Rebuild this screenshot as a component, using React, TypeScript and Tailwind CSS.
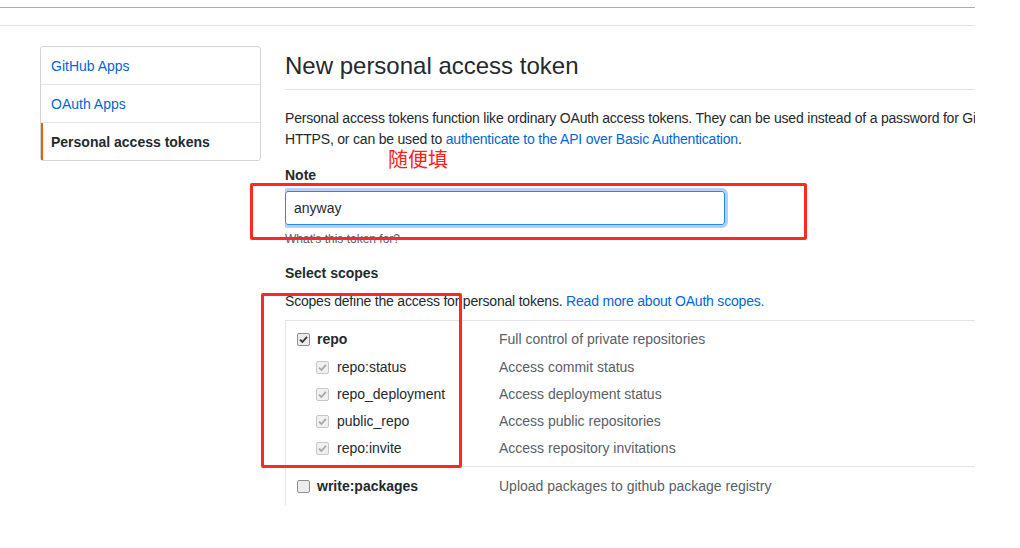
import React from 'react';

type Scope = { name: string; desc: string };

const repoChildren: Scope[] = [
  { name: 'repo:status', desc: 'Access commit status' },
  { name: 'repo_deployment', desc: 'Access deployment status' },
  { name: 'public_repo', desc: 'Access public repositories' },
  { name: 'repo:invite', desc: 'Access repository invitations' },
];

const Checkbox: React.FC<{ checked?: boolean; disabled?: boolean }> = ({ checked, disabled }) => (
  <span
    className={
      'inline-flex w-[13px] h-[13px] shrink-0 items-center justify-center rounded-[2px] border ' +
      (disabled ? 'border-[#c8c8c8] bg-[#f0f0f0]' : 'border-[#8f8f8f] bg-[#ececec]')
    }
  >
    {checked && (
      <svg width="9" height="9" viewBox="0 0 9 9">
        <path
          d="M1 4.6 L3.4 7 L8 1.8"
          fill="none"
          stroke={disabled ? '#a8a8a8' : '#333'}
          strokeWidth="1.8"
        />
      </svg>
    )}
  </span>
);

const App: React.FC = () => {
  return (
    <div
      className="relative w-[1020px] h-[548px] overflow-hidden bg-white text-[14px] text-[#24292e]"
      style={{ fontFamily: '"Liberation Sans", Arial, sans-serif' }}
    >
      <div className="w-[975px] pt-[7px]">
        <div className="h-px bg-[#acacac]" />
        <div className="h-[17px]" />
        <div className="h-px bg-[#e3e3e3]" />
      </div>

      <div className="flex pl-[40px] pt-[20px] w-[975px]">
        {/* sidebar */}
        <div className="w-[221px] shrink-0 self-start rounded-[3px] border border-[#d1d5da]">
          <div className="h-[38px] flex items-center pt-[1px] pl-[10px] border-b border-[#e1e4e8] text-[#0366d6]">
            GitHub Apps
          </div>
          <div className="h-[38px] flex items-center pt-[1px] pl-[10px] border-b border-[#e1e4e8] text-[#0366d6]">
            OAuth Apps
          </div>
          <div className="h-[37px] flex items-center pt-[1px] pl-[8px] border-l-2 border-[#e36209] font-semibold text-[#24292e]">
            Personal access tokens
          </div>
        </div>

        {/* main */}
        <div className="ml-[24px] flex-1 overflow-hidden">
          <div className="pb-[5px] border-b border-[#e1e4e8] mt-[2px]">
            <h1 className="text-[24px] leading-[36px] font-light whitespace-nowrap">New personal access token</h1>
          </div>

          <p className="mt-[18px] leading-[21px] whitespace-nowrap tracking-[-0.2px]">
            Personal access tokens function like ordinary OAuth access tokens. They can be used instead of a password for Git over
            <br />
            HTTPS, or can be used to <span className="text-[#0366d6]">authenticate to the API over Basic Authentication</span>.
          </p>

          <div className="mt-[15px] font-semibold leading-[21px]">Note</div>
          <div className="mt-[5px] w-[440px] h-[34px] rounded-[3px] border border-[#2188ff] shadow-[0_0_0_3px_rgba(3,102,214,0.3)] flex items-center pl-[8px]">
            anyway
          </div>
          <div className="mt-[5px] text-[12px] leading-[18px] text-[#586069]">What's this token for?</div>

          <div className="mt-[15px] font-semibold leading-[21px]">Select scopes</div>
          <div className="mt-[7px] leading-[21px] tracking-[-0.2px]">
            Scopes define the access for personal tokens.{' '}
            <span className="text-[#0366d6]">Read more about OAuth scopes.</span>
          </div>

          <div className="mt-[8px] border-t border-l border-[#e1e4e8]">
            <div className="pt-[8px] pb-[4px] border-b border-[#e1e4e8]">
              <div className="flex items-center h-[21px] pl-[11px]">
                <div className="w-[202px] flex items-center gap-[7px]">
                  <Checkbox checked />
                  <span className="font-semibold">repo</span>
                </div>
                <span className="text-[#586069]">Full control of private repositories</span>
              </div>
              <div className="mt-[4px]">
                {repoChildren.map((s) => (
                  <div key={s.name} className="flex items-center h-[27px] pl-[11px]">
                    <div className="w-[202px] flex items-center gap-[8px] pl-[19px]">
                      <Checkbox checked disabled />
                      <span>{s.name}</span>
                    </div>
                    <span className="text-[#586069]">{s.desc}</span>
                  </div>
                ))}
              </div>
            </div>
            <div className="pt-[9px] pb-[8px]">
              <div className="flex items-center h-[21px] pl-[11px]">
                <div className="w-[202px] flex items-center gap-[7px]">
                  <Checkbox />
                  <span className="font-semibold">write:packages</span>
                </div>
                <span className="text-[#586069]">Upload packages to github package registry</span>
              </div>
            </div>
          </div>
        </div>
      </div>

      {/* annotations */}
      <div
        className="absolute left-[388px] top-[147px] text-[20px] leading-[24px] text-[#ff2020]"
        style={{ fontFamily: '"Noto Sans CJK SC", sans-serif' }}
      >
        随便填
      </div>
      <div className="absolute left-[250px] top-[183px] w-[557px] h-[57px] border-[3px] border-[#ff2a1f] rounded-[2px]" />
      <div className="absolute left-[261px] top-[293px] w-[201px] h-[175px] border-[3px] border-[#ff2a1f] rounded-[2px]" />
    </div>
  );
};

export default App;
